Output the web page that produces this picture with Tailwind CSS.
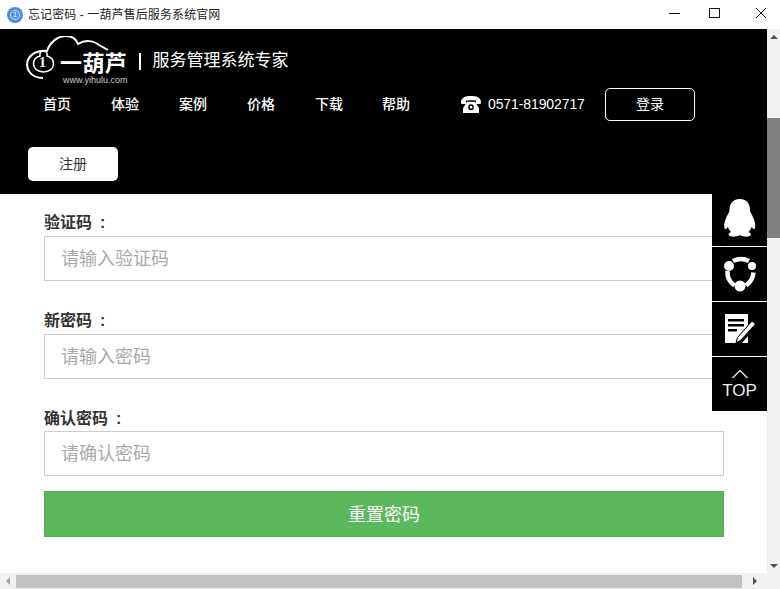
<!DOCTYPE html>
<html lang="zh-CN">
<head>
  <meta charset="UTF-8">
  <title>忘记密码 - 一葫芦售后服务系统官网</title>
  <script src="https://cdn.jsdelivr.net/npm/@tailwindcss/browser@4"></script>
</head>
<body class="w-[780px] h-[589px] overflow-hidden bg-white font-['Liberation_Sans','Noto_Sans_CJK_SC',sans-serif]">

  <!-- window title bar -->
  <div class="h-[29px] flex items-center bg-white">
    <div class="ml-[7px] w-4 h-4 rounded-full bg-[#4a90e2] flex items-center justify-center">
      <div class="w-[10px] h-[10px] rounded-full border border-white/70 flex items-center justify-center text-[8px] leading-none text-white">1</div>
    </div>
    <div class="ml-[5px] text-xs text-[#222] tracking-[0.1px]">忘记密码 - 一葫芦售后服务系统官网</div>
    <div class="ml-auto flex items-center">
      <svg class="w-[43px] h-[29px]" viewBox="0 0 43 29"><path d="M12 13.500h11" stroke="#111" fill="none"/></svg>
      <svg class="w-[46px] h-[29px]" viewBox="0 0 46 29"><rect x="9.500" y="8.500" width="10" height="9" stroke="#111" fill="none"/></svg>
      <svg class="w-[34px] h-[29px]" viewBox="0 0 34 29"><path d="M10 8l10 10M20 8l-10 10" stroke="#111" fill="none"/></svg>
    </div>
  </div>

  <div class="flex h-[560px]">
    <div class="w-[767px] flex flex-col">
      <div class="relative h-[544px] overflow-hidden">

        <!-- header -->
        <div class="bg-black h-[165px] text-white">
          <div class="h-[53px] pl-[26px] pt-[7px] flex items-start">
            <div class="relative w-[102px] h-[46px]">
              <svg class="absolute left-0 top-0 w-[90px] h-[46px]" viewBox="26 36 90 46">
                <path d="M43 78C30 78 25 68 28 60C31 53 39 50 47 51C50 42 58 36 66 36C72 36 76 39 78 44C84 40 93 40 99 45L108 50" fill="none" stroke="#fff" stroke-width="2"/>
                <path d="M43.500 51c3 0 4 2 3.500 5c4.500 1 6.500 4 6.500 8c0 4.500-4 8-10 8s-10-3.500-10-8c0-4 2-7 6.500-8c-.5-3 .5-5 3.500-5z" fill="none" stroke="#fff" stroke-width="1.500"/>
              </svg>
              <div class="absolute left-[13px] top-[19px] text-[14px] leading-4 font-bold font-['Liberation_Serif',serif]">1</div>
              <div class="absolute left-[34px] top-[17px] w-[70px] text-[22px] leading-[22px] tracking-[0.4px] font-bold whitespace-nowrap">一葫芦</div>
              <div class="absolute left-[37px] top-[40px] text-[9px] leading-[9px] text-[#ccc] whitespace-nowrap">www.yihulu.com</div>
            </div>
            <div class="ml-[11px] mt-[17px] w-[1.500px] h-[17px] bg-white"></div>
            <div class="ml-[12px] mt-[12px] text-[17px] leading-[25px] whitespace-nowrap">服务管理系统专家</div>
          </div>

          <div class="h-[44px] pl-[43px] flex items-center text-[14px] font-medium">
            <div class="w-[68px]">首页</div>
            <div class="w-[68px]">体验</div>
            <div class="w-[68px]">案例</div>
            <div class="w-[68px]">价格</div>
            <div class="w-[67px]">下载</div>
            <div class="w-[79px]">帮助</div>
            <svg class="w-[20px] h-[17px]" viewBox="0 0 20 16" preserveAspectRatio="none">
              <path d="M0 6C0 1 5 0 10 0s10 1 10 6l-.5 1.500h-4.500V4.500C13 3.700 7 3.700 5 4.500v3H.5z" fill="#fff"/>
              <path d="M6 5.500h8l4 6V16H2v-4.500z" fill="#fff"/>
              <circle cx="10" cy="10.500" r="2.800" fill="#000"/>
              <circle cx="10" cy="10.500" r="1.300" fill="#fff"/>
            </svg>
            <div class="ml-[7px] w-[117px] text-[14px] font-normal tracking-[-0.1px]">0571-81902717</div>
            <div class="w-[90px] h-[33px] rounded-[5px] border border-white flex items-center justify-center text-[14px] font-normal">登录</div>
          </div>

          <div class="pl-[28px] pt-[21px]">
            <div class="w-[90px] h-[34px] rounded-[5px] bg-white text-[#333] flex items-center justify-center text-[14px]">注册</div>
          </div>
        </div>

        <!-- form -->
        <div class="pl-[44px] w-[724px]">
          <div class="h-[42px] pt-[16px] text-base leading-[26px] font-bold text-[#333]">验证码<span class="ml-[8px]">:</span></div>
          <div class="h-[45px] border border-[#ccc] pl-[16px] flex items-center text-lg text-[#a9a9a9]">请输入验证码</div>
          <div class="h-[53px] pt-[27px] text-base leading-[26px] font-bold text-[#333]">新密码<span class="ml-[8px]">:</span></div>
          <div class="h-[45px] border border-[#ccc] pl-[16px] flex items-center text-lg text-[#a9a9a9]">请输入密码</div>
          <div class="h-[52px] pt-[27px] text-base leading-[26px] font-bold text-[#333]">确认密码<span class="ml-[8px]">:</span></div>
          <div class="h-[45px] border border-[#ccc] pl-[16px] flex items-center text-lg text-[#a9a9a9]">请确认密码</div>
          <div class="mt-[15px] h-[46px] bg-[#5cb85c] border border-[#4cae4c] flex items-center justify-center text-lg text-white pt-[2px]">重置密码</div>
        </div>

        <!-- floating side tools -->
        <div class="absolute left-[712px] top-[161px] w-[55px] flex flex-col gap-[1px]">
          <div class="h-[56px] bg-black flex items-center justify-center">
            <svg class="w-[34px] h-[40px]" viewBox="0 0 34 40">
              <path d="M17 1c7 0 10 5 10 11c0 2 1 3 2 5c2 4 4 9 3 13c-.5 2-2 1-3.500-1c-.5 2-1.500 3.500-3 5c2 1 3 2 2 3.500c-1.500 1.500-7 1.500-10 0c-.5-.5-1-.5-1.500 0c-3 1.500-8.500 1.500-10 0c-1-1.500 0-2.500 2-3.500c-1.500-1.500-2.500-3-3-5c-1.500 2-3 3-3.500 1c-1-4 1-9 3-13c1-2 2-3 2-5c0-6 3-11 10-11z" fill="#fff"/>
            </svg>
          </div>
          <div class="h-[54px] bg-black flex items-center justify-center">
            <svg class="w-[42px] h-[42px]" viewBox="0 0 42 42" fill="none">
              <path d="M14 8C19 5.500 25 5.500 30 8" stroke="#fff" stroke-width="4.500"/>
              <path d="M8.500 18c-.5 6 2 11 7 14.500" stroke="#fff" stroke-width="4.500"/>
              <path d="M27 32.500c4-3 7-7 7.500-13" stroke="#fff" stroke-width="4.500"/>
              <circle cx="10" cy="13" r="5" fill="#fff"/>
              <circle cx="33" cy="13" r="4" fill="#fff"/>
              <circle cx="21" cy="33" r="5.500" fill="#fff"/>
            </svg>
          </div>
          <div class="h-[54px] bg-black flex items-center justify-center">
            <svg class="w-[32px] h-[32px]" viewBox="0 0 32 32">
              <path d="M1 1h23v12L13 26l-1 4H1z" fill="#fff"/>
              <path d="M4 6h16v2.500H4zM4 11h16v2.500H4zM4 16h9v2.500H4z" fill="#000"/>
              <path d="M28 8l3.500 3L17 27l-5 3l1.500-5.500z" fill="#fff" stroke="#000" stroke-width="1"/>
              <path d="M18 30h6v-7z" fill="#fff"/>
            </svg>
          </div>
          <div class="h-[54px] bg-black flex flex-col items-center pt-[12px] text-white">
            <svg class="w-[18px] h-[10px]" viewBox="0 0 18 10"><path d="M1.500 9L9 1.500L16.500 9" fill="none" stroke="#ddd" stroke-width="1.500"/></svg>
            <div class="mt-[2px] text-[17px] leading-[20px] text-[#eee]">TOP</div>
          </div>
        </div>
      </div>

      <!-- horizontal scrollbar -->
      <div class="h-4 bg-[#f1f1f1] flex items-center">
        <div class="w-4 flex justify-center"><div class="w-0 h-0 border-y-[4px] border-y-transparent border-r-[4px] border-r-[#a3a3a3]"></div></div>
        <div class="w-[726px] h-[13px] bg-[#c1c1c1]"></div>
        <div class="w-[25px] flex justify-center"><div class="w-0 h-0 border-y-[4px] border-y-transparent border-l-[4px] border-l-[#505050]"></div></div>
      </div>
    </div>

    <!-- vertical scrollbar -->
    <div class="w-[13px] bg-[#f1f1f1] flex flex-col items-center">
      <div class="mt-[6px] w-0 h-0 border-x-[4px] border-x-transparent border-b-[4px] border-b-[#505050]"></div>
      <div class="mt-[79px] w-[13px] h-[120px] bg-[#808080]"></div>
      <div class="mt-[326px] w-0 h-0 border-x-[4px] border-x-transparent border-t-[4px] border-t-[#505050]"></div>
    </div>
  </div>
</body>
</html>
